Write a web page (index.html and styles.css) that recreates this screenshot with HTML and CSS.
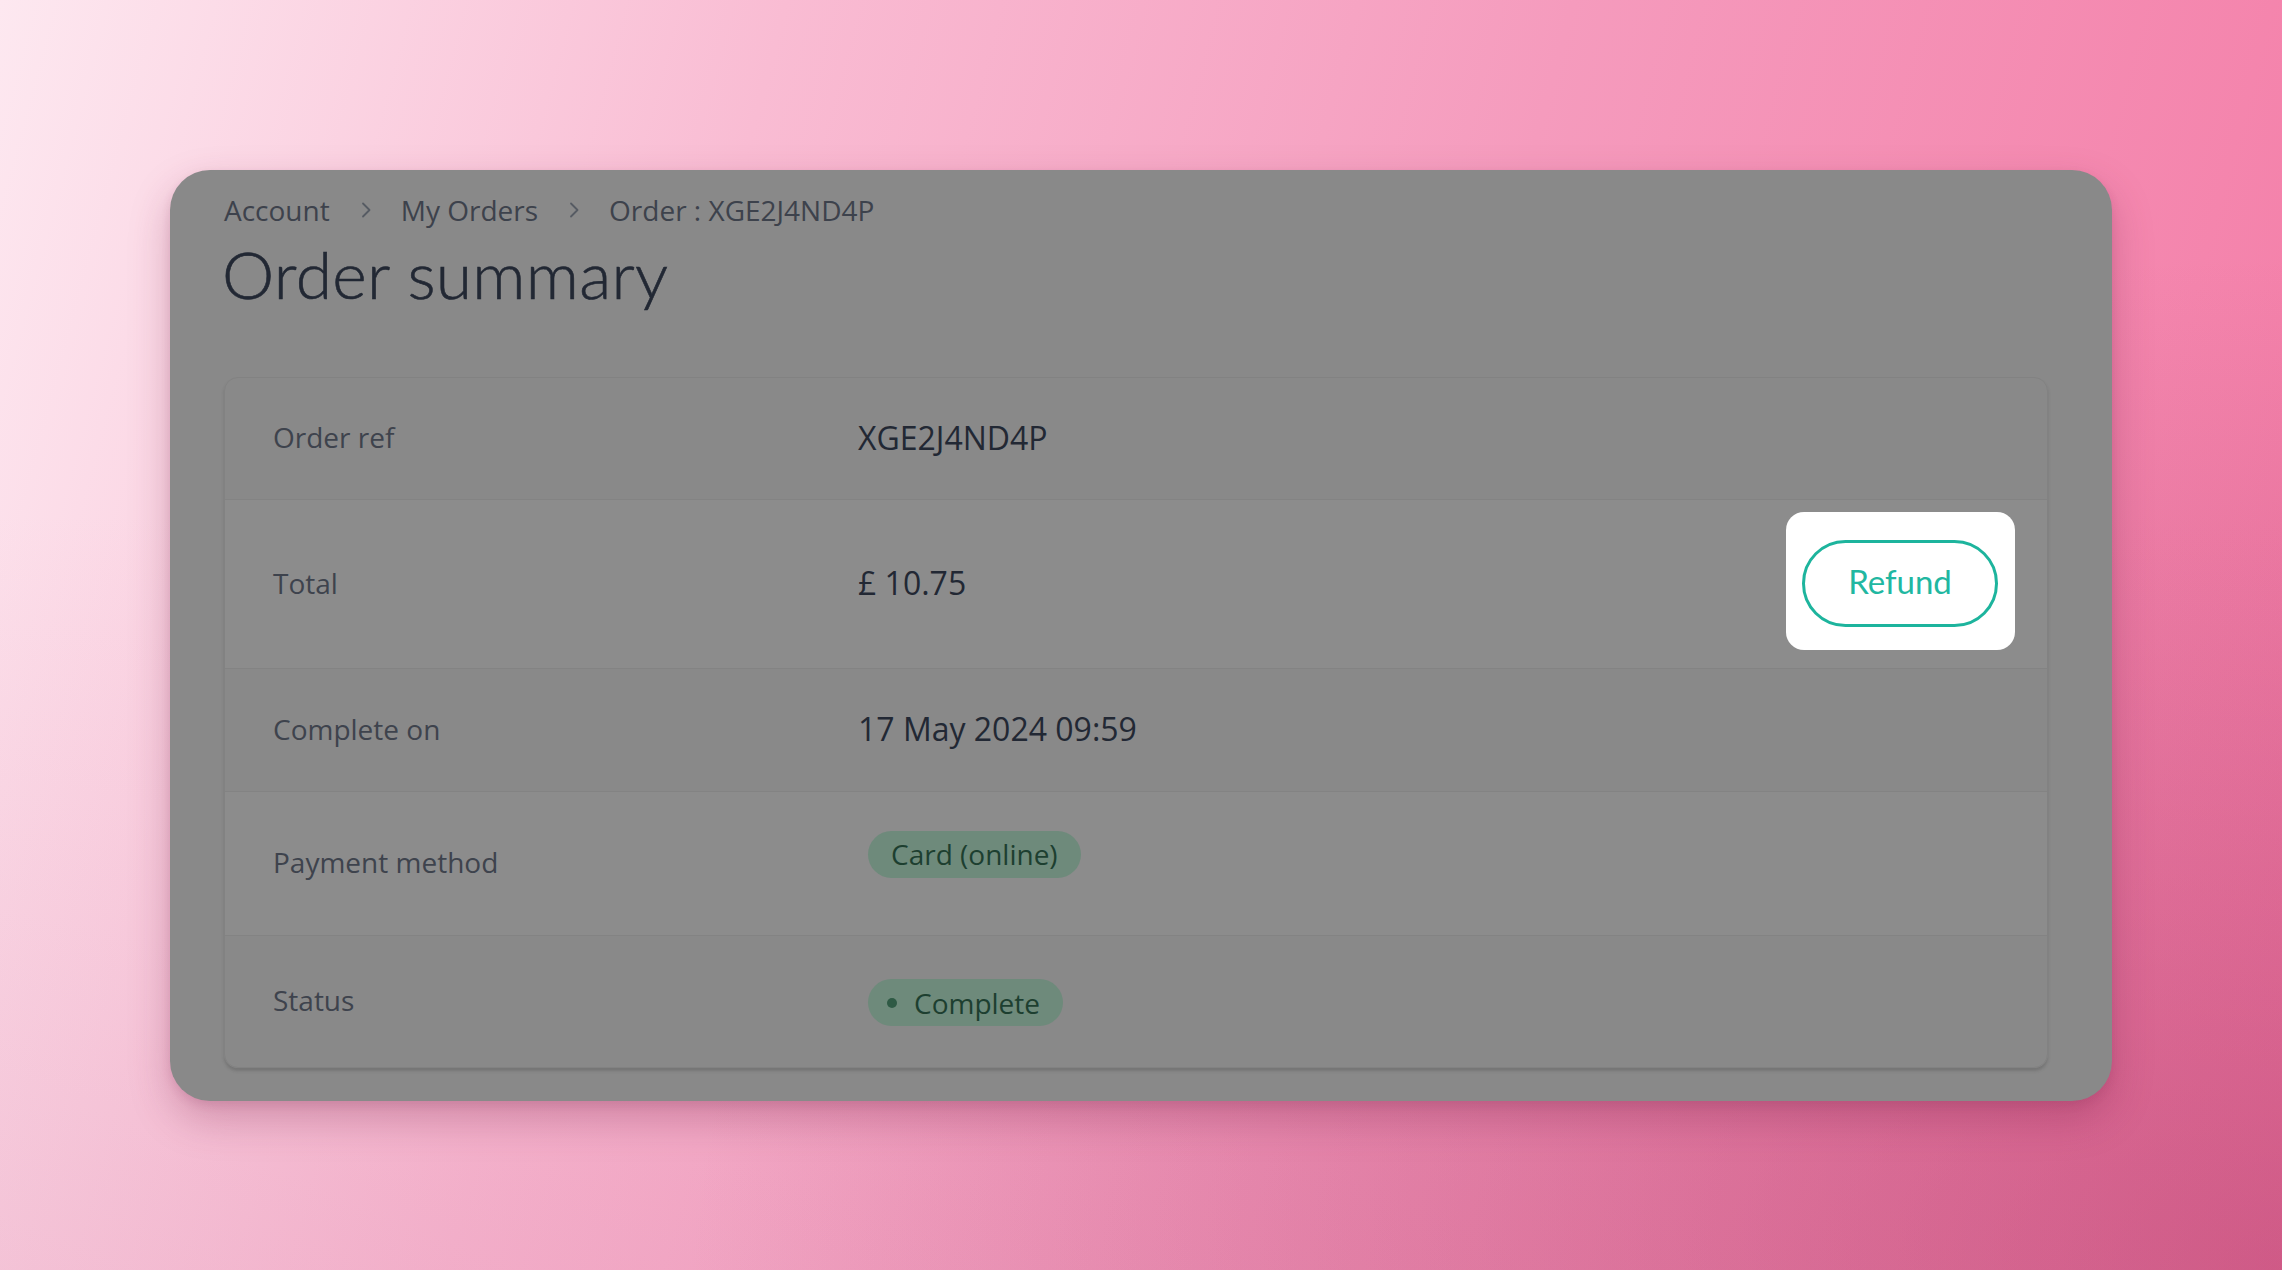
FILE: index.html
```html
<!DOCTYPE html>
<html lang="en">
<head>
  <meta charset="UTF-8">
  <meta name="viewport" content="width=device-width, initial-scale=1.0">
  <title>Order summary</title>
  <link rel="stylesheet" href="styles.css">
</head>
<body>
  <div class="stage">
    <div class="panel">
      <nav class="breadcrumb">
        <a href="#">Account</a>
        <span class="sep">
          <svg width="14" height="20" viewBox="0 0 14 20"><path d="M4 3.5l6.5 6.5-6.5 6.5" fill="none" stroke="currentColor" stroke-width="1.8" stroke-linecap="round" stroke-linejoin="round"/></svg>
        </span>
        <a href="#">My Orders</a>
        <span class="sep">
          <svg width="14" height="20" viewBox="0 0 14 20"><path d="M4 3.5l6.5 6.5-6.5 6.5" fill="none" stroke="currentColor" stroke-width="1.8" stroke-linecap="round" stroke-linejoin="round"/></svg>
        </span>
        <span class="current">Order : XGE2J4ND4P</span>
      </nav>

      <h1>Order summary</h1>

      <div class="details">
        <div class="row row-ref">
          <div class="label">Order ref</div>
          <div class="value">XGE2J4ND4P</div>
        </div>
        <div class="row row-total">
          <div class="label">Total</div>
          <div class="value">£ 10.75</div>
          <div class="spotlight">
            <button class="btn-refund">Refund</button>
          </div>
        </div>
        <div class="row row-date">
          <div class="label">Complete on</div>
          <div class="value">17 May 2024 09:59</div>
        </div>
        <div class="row row-payment">
          <div class="label">Payment method</div>
          <div class="value"><span class="badge badge-up">Card (online)</span></div>
        </div>
        <div class="row row-status">
          <div class="label">Status</div>
          <div class="value"><span class="badge"><span class="dot"></span>Complete</span></div>
        </div>
      </div>
    </div>
  </div>
</body>
</html>
```

FILE: styles.css
```css
/* Reset */
* {
  box-sizing: border-box;
  margin: 0;
  padding: 0;
}

html, body {
  width: 100%;
  height: 100%;
}

body {
  font-family: 'Open Sans', 'Liberation Sans', sans-serif;
  color: #262b35;
  background:
    radial-gradient(ellipse 70% 80% at 100% 100%, rgba(150, 40, 85, 0.35), rgba(150, 40, 85, 0) 100%),
    linear-gradient(to bottom, rgba(255, 255, 255, 0) 40%, rgba(200, 90, 140, 0.15) 100%),
    linear-gradient(105deg, #fde8f0 0%, #f9bcd3 30%, #f59bbd 60%, #f47aa5 100%);
  overflow: hidden;
}

.stage {
  padding: 170px 170px 0 170px;
}

/* Dimmed panel */
.panel {
  background: #898989;
  border-radius: 40px;
  padding: 20px 64px 33px 54px;
  box-shadow: 0 18px 40px rgba(120, 30, 70, 0.28), 0 4px 10px rgba(120, 30, 70, 0.12);
}

/* Breadcrumb */
.breadcrumb {
  display: flex;
  align-items: center;
  font-size: 28px;
  line-height: 40px;
  color: #3d424c;
}
.breadcrumb a {
  color: inherit;
  text-decoration: none;
}
.breadcrumb .sep {
  display: flex;
  align-items: center;
  color: #565b63;
  margin: 0 28px 0 29px;
}
.breadcrumb .current {
  color: #3d424c;
}

h1 {
  font-family: Lato, 'Open Sans', sans-serif;
  font-weight: 300;
  font-size: 66px;
  line-height: 80px;
  color: #222834;
  margin: 4px 0 0 -2px;
  letter-spacing: 0.3px;
  -webkit-text-stroke: 0.6px #222834;
}

/* Detail table */
.details {
  margin-top: 63px;
  border: 1px solid #828282;
  border-radius: 14px;
  box-shadow: 0 3px 3px rgba(60, 60, 60, 0.25);
  overflow: hidden;
}

.row {
  display: grid;
  grid-template-columns: 585px 1fr auto;
  align-items: center;
  padding: 0 32px 3px 48px;
  border-top: 1px solid #838383;
}
.row:first-child {
  border-top: none;
}
.row-ref { height: 121px; }
.row-total { height: 169px; background: #8c8c8c; padding-bottom: 0; }
.row-date { height: 123px; }
.row-payment { height: 144px; background: #8c8c8c; }
.row-status { height: 132px; }

.row-total .label,
.row-total .value {
  margin-bottom: 3px;
}

.label {
  font-size: 28px;
  color: #3e434d;
}

.value {
  font-size: 32px;
  color: #222834;
}

/* Badges */
.badge {
  display: inline-flex;
  align-items: center;
  height: 47px;
  padding: 0 23px;
  margin-left: 10px;
  border-radius: 24px;
  background: #6e8a7b;
  color: #1d3f30;
  font-size: 28px;
}
.badge-up {
  position: relative;
  top: -8px;
}
.dot {
  width: 10px;
  height: 10px;
  border-radius: 50%;
  background: #2f5a45;
  margin: 0 17px 0 -4px;
}

/* Highlighted refund action */
.spotlight {
  background: #fff;
  border-radius: 18px;
  padding: 28px 17px 23px 16px;
  margin-bottom: 6px;
}
.btn-refund {
  display: block;
  width: 196px;
  height: 87px;
  padding-bottom: 5px;
  border: 3px solid #1db49d;
  border-radius: 44px;
  background: #fff;
  color: #21b7a1;
  font-family: Lato, 'Open Sans', sans-serif;
  font-size: 33px;
  cursor: pointer;
}
```
